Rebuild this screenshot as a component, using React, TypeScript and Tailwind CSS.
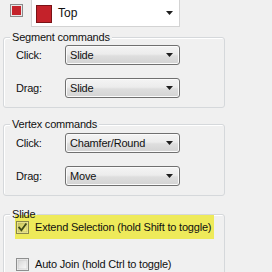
import React from "react";

const Arrow = () => (
  <svg width="7" height="4" viewBox="0 0 7 4" className="shrink-0">
    <polygon points="0,0 7,0 3.5,4" fill="#1e1e1e" />
  </svg>
);

const Dropdown = ({ text }: { text: string }) => (
  <div className="w-[115px] h-[20px] rounded-[3px] border border-[#707070] bg-[linear-gradient(#f4f4f4,#ececec_45%,#dedede_55%,#d3d3d3)] flex items-center justify-between pl-[4px] pr-[6px] shadow-[inset_0_0_0_1px_#fbfbfb]">
    <span className="leading-[14px]">{text}</span>
    <Arrow />
  </div>
);

const Row = ({ label, value }: { label: string; value: string }) => (
  <div className="flex items-center pl-[12px]">
    <span className="w-[49px] leading-[14px]">{label}</span>
    <Dropdown text={value} />
  </div>
);

const Group = ({ title, children, className }: { title: string; children: React.ReactNode; className?: string }) => (
  <div className={"ml-[3px] w-[222px] rounded-[3px] border border-[#d5d8db] shadow-[inset_1px_1px_0_#ffffff] " + (className ?? "")}>
    <div className="-mt-[8px] ml-[6px] px-[2px] w-fit bg-[#f0f0f0] leading-[14px]">{title}</div>
    {children}
  </div>
);

const CheckBox = ({ checked, tint }: { checked?: boolean; tint?: boolean }) => (
  <svg width="13" height="13" viewBox="0 0 13 13" className="shrink-0">
    <defs>
      <linearGradient id={tint ? "cbt" : "cbn"} x1="0" y1="0" x2="1" y2="1">
        <stop offset="0" stopColor={tint ? "#c9c45a" : "#d6d6d6"} />
        <stop offset="1" stopColor={tint ? "#f3ef8a" : "#fafafa"} />
      </linearGradient>
    </defs>
    <rect x="0.5" y="0.5" width="12" height="12" fill={tint ? "#f6f29a" : "#f4f4f4"} stroke={tint ? "#8a874a" : "#8e8f8f"} />
    <rect x="2" y="2" width="9" height="9" fill={`url(#${tint ? "cbt" : "cbn"})`} stroke={tint ? "#b8b36a" : "#c4c4c4"} strokeWidth="0.6" />
    {checked && (
      <path d="M3.2 6.6 L5.4 9.2 L9.8 3.2" fill="none" stroke="#3d4818" strokeWidth="1.8" strokeLinecap="square" />
    )}
  </svg>
);

export default function App() {
  return (
    <div className="w-[272px] h-[272px] overflow-hidden bg-[#f0f0f0] text-[11px] tracking-[-0.2px] text-[#111] font-['Liberation_Sans',Arial,sans-serif] flex flex-col">
      {/* top row */}
      <div className="flex items-start h-[27px] shrink-0">
        <div className="ml-[10px] mt-[4px] w-[13px] h-[13px] border border-[#8a8a8a] bg-[#c4222a] shadow-[inset_0_0_0_1px_#e8e8e8]" />
        <div className="ml-[8px] -mt-px w-[149px] h-[28px] bg-white border border-[#d3d3d3] flex items-center justify-between pl-[4px] pr-[6px]">
          <div className="flex items-center">
            <div className="w-[16px] h-[18px] border border-[#7a1216] bg-[#c4222a] mt-[2px]" />
            <span className="ml-[6px] text-[12px] tracking-normal leading-[14px]">Top</span>
          </div>
          <Arrow />
        </div>
      </div>

      <Group title="Segment commands" className="mt-[10px] pb-[9px]">
        <div className="mt-[1px] flex flex-col gap-[13px]">
          <Row label="Click:" value="Slide" />
          <Row label="Drag:" value="Slide" />
        </div>
      </Group>

      <Group title="Vertex commands" className="mt-[16px] pb-[9px]">
        <div className="mt-[2px] flex flex-col gap-[13px]">
          <Row label="Click:" value="Chamfer/Round" />
          <Row label="Drag:" value="Move" />
        </div>
      </Group>

      <Group title="Slide" className="mt-[18px] pb-[10px]">
        <div className="-mt-[6px] ml-[11px] w-[199px] h-[24px] bg-[#eeea5a] flex items-center pl-[1px]">
          <CheckBox checked tint />
          <span className="ml-[6px] leading-[14px]">Extend Selection (hold Shift to toggle)</span>
        </div>
        <div className="mt-[18px] ml-[12px] flex items-center">
          <CheckBox />
          <span className="ml-[6px] leading-[14px]">Auto Join (hold Ctrl to toggle)</span>
        </div>
      </Group>
    </div>
  );
}
